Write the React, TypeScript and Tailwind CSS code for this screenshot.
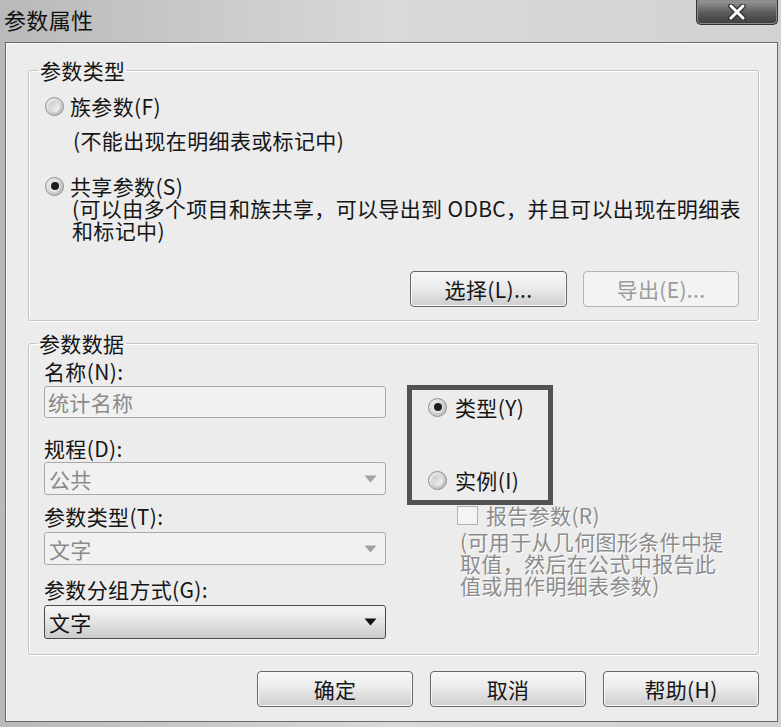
import React from "react";

type GroupProps = {
  title: string;
  className?: string;
  children: React.ReactNode;
};

const Group: React.FC<GroupProps> = ({ title, className, children }) => {
  return (
    <fieldset
      className={`min-w-0 border border-[#c4c4c4] rounded-[3px] shadow-[inset_1px_1px_0_#ffffff,1px_1px_0_#ffffff] ${className}`}
    >
      <legend className="-ml-[7px] px-[2px] leading-[22px] text-[#151515]">{title}</legend>
      {children}
    </fieldset>
  );
};

const Radio: React.FC<{ checked?: boolean }> = ({ checked }) => {
  return (
    <span className="w-[19px] h-[19px] shrink-0 rounded-full border border-[#8e8e8e] bg-linear-to-br from-[#f2f2f2] to-[#b9b9b9] flex items-center justify-center">
      {checked ? (
        <span className="w-[11px] h-[11px] rounded-full bg-[#e6e6e6] flex items-center justify-center">
          <span className="w-[8px] h-[8px] rounded-full bg-[#1c1c1c]" />
        </span>
      ) : (
        <span className="w-[11px] h-[11px] rounded-full bg-linear-to-br from-[#c9c9c9] to-[#f6f6f6]" />
      )}
    </span>
  );
};

const Button: React.FC<{ label: string; disabled?: boolean; className?: string }> = ({
  label,
  disabled,
  className,
}) => {
  return (
    <div
      className={`h-[36px] rounded-[4px] border flex items-center justify-center leading-[22px] ${
        disabled
          ? "border-[#b4b4b4] bg-[#f3f3f3] text-[#9b9b9b]"
          : "border-[#666666] bg-linear-to-b from-[#f7f7f7] via-[#e9e9e9] to-[#cdcdcd] text-[#151515] shadow-[inset_0_0_0_1px_#fafafa]"
      } ${className}`}
    >
      {label}
    </div>
  );
};

const Arrow: React.FC<{ dark?: boolean }> = ({ dark }) => (
  <svg width="13" height="8" viewBox="0 0 13 8" className="shrink-0">
    <path d="M0.5 0.5 H12.5 L6.5 7.5 Z" fill={dark ? "#111111" : "#a2a2a2"} />
  </svg>
);

const Select: React.FC<{ value: string; active?: boolean; className?: string }> = ({
  value,
  active,
  className,
}) => {
  return (
    <div
      className={`h-[33px] rounded-[3px] border flex items-center justify-between pl-[4px] pr-[8px] leading-[22px] ${
        active
          ? "border-[#4a4a4a] bg-linear-to-b from-[#f6f6f6] via-[#e4e4e4] to-[#cbcbcb] text-[#111111]"
          : "border-[#a9a9a9] bg-[#f1f1f1] text-[#8a8a8a]"
      } ${className}`}
    >
      <span>{value}</span>
      <Arrow dark={active} />
    </div>
  );
};

export default function App() {
  return (
    <div className="w-[781px] h-[727px] overflow-hidden flex flex-col bg-linear-to-r from-[#b9b9b9] via-[#d9d9d9] to-[#d2d2d2] font-['Noto_Sans_CJK_SC',sans-serif] text-[21px] tracking-[0.35px] text-[#151515]">
      {/* title bar */}
      <div className="relative h-[42px] shrink-0 pl-[4px] pt-[5px]">
        <span className="text-[22px] leading-[26px] text-[#111111]">参数属性</span>
        <div className="absolute top-0 right-[3px] w-[82px] h-[25px] rounded-b-[5px] border border-t-0 border-[#333333] bg-linear-to-b from-[#9a9a9a] via-[#5e5e5e] to-[#3e3e3e] flex items-center justify-center shadow-[inset_0_0_0_1px_#8a8a8a]">
          <svg width="22" height="16" viewBox="0 0 22 16">
            <path d="M5 2 L17 14 M17 2 L5 14" stroke="#333333" strokeWidth="5.5" strokeLinecap="round" />
            <path d="M5 2 L17 14 M17 2 L5 14" stroke="#ffffff" strokeWidth="3" strokeLinecap="round" />
          </svg>
        </div>
      </div>

      {/* client area */}
      <div className="ml-[5px] mr-[3px] h-[680px] shrink-0 border border-[#6a6a6a] bg-[#ececec] shadow-[inset_1px_1px_0_#fafafa] pl-[22px] pr-[18px] flex flex-col">
        <Group title="参数类型" className="mt-[16px] pl-[16px] pr-[19px] pb-[13px]">
          <div className="mt-[14px] flex items-center h-[22px]">
            <Radio />
            <span className="ml-[6px] leading-[22px]">族参数(F)</span>
          </div>
          <div className="mt-[12px] ml-[28px] leading-[22px]">(不能出现在明细表或标记中)</div>
          <div className="mt-[24px] flex items-center h-[22px]">
            <Radio checked />
            <span className="ml-[6px] leading-[22px]">共享参数(S)</span>
          </div>
          <div className="ml-[27px] leading-[22px] whitespace-nowrap">
            (可以由多个项目和族共享，可以导出到 ODBC，并且可以出现在明细表
            <br />
            和标记中)
          </div>
          <div className="mt-[30px] flex justify-end gap-[16px]">
            <Button label="选择(L)..." className="w-[157px]" />
            <Button label="导出(E)..." disabled className="w-[156px]" />
          </div>
        </Group>

        <Group title="参数数据" className="mt-[11px] pl-[15px] pr-[19px] pb-[15px]">
          <div className="flex">
            <div className="w-[342px] mt-[6px]">
              <div className="leading-[22px]">名称(N):</div>
              <div className="mt-[4px] h-[32px] rounded-[3px] border border-[#a9a9a9] bg-[#f1f1f1] pl-[3px] flex items-center leading-[22px] text-[#8a8a8a]">
                统计名称
              </div>
              <div className="mt-[19px] leading-[22px]">规程(D):</div>
              <Select value="公共" className="mt-[3px]" />
              <div className="mt-[10px] leading-[22px]">参数类型(T):</div>
              <Select value="文字" className="mt-[5px]" />
              <div className="mt-[13px] leading-[22px]">参数分组方式(G):</div>
              <Select value="文字" active className="mt-[5px] h-[34px]" />
            </div>

            <div className="ml-[21px] pt-[31px]">
              <div className="w-[146px] h-[120px] border-[5px] border-[#525252] pl-[16px] pt-[6px] flex flex-col justify-between pb-[9px]">
                <div className="flex items-center h-[22px]">
                  <Radio checked />
                  <span className="ml-[8px] leading-[22px]">类型(Y)</span>
                </div>
                <div className="flex items-center h-[22px]">
                  <Radio />
                  <span className="ml-[8px] leading-[22px]">实例(I)</span>
                </div>
              </div>
              <div className="-mt-[1px] ml-[50px] flex items-center h-[22px]">
                <span className="w-[21px] h-[19px] border border-[#b2b2b2] bg-[#f4f4f4]" />
                <span className="ml-[8px] leading-[22px] text-[#8c8c8c] [text-shadow:1px_1px_0_#ffffff]">
                  报告参数(R)
                </span>
              </div>
              <div className="mt-[4px] ml-[53px] leading-[22px] whitespace-nowrap text-[#8c8c8c] [text-shadow:1px_1px_0_#ffffff]">
                (可用于从几何图形条件中提
                <br />
                取值，然后在公式中报告此
                <br />
                值或用作明细表参数)
              </div>
            </div>
          </div>
        </Group>

        <div className="mt-[16px] flex justify-end gap-[17px]">
          <Button label="确定" className="w-[156px]" />
          <Button label="取消" className="w-[156px]" />
          <Button label="帮助(H)" className="w-[156px]" />
        </div>
      </div>
    </div>
  );
}
